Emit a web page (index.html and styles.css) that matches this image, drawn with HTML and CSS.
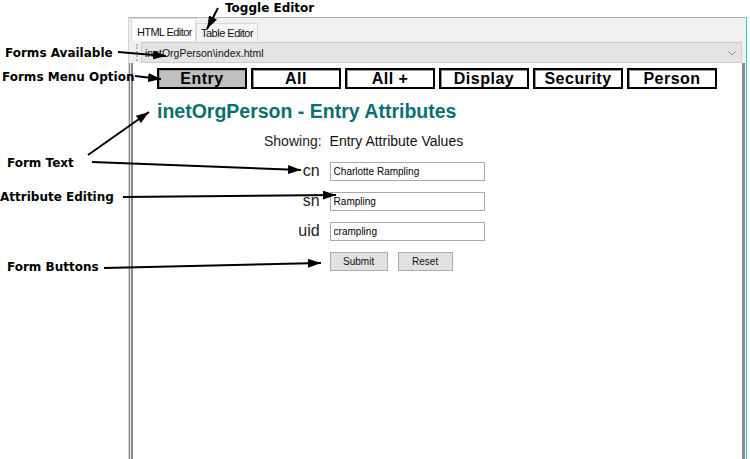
FILE: index.html
```html
<!DOCTYPE html>
<html lang="en">
<head>
    <meta charset="UTF-8">
    <meta name="viewport" content="width=device-width, initial-scale=1.0">
    <title>Form Editor - inetOrgPerson</title>
    <link rel="stylesheet" href="styles.css">
</head>
<body>
    <div class="window">
        <div class="tabs">
            <div class="tab active">HTML Editor</div>
            <div class="tab">Table Editor</div>
        </div>

        <div class="toolbar">
            <span class="grip"></span>
            <div class="select">
                <span>inetOrgPerson\index.html</span>
                <svg class="chevron" width="8" height="5" viewBox="0 0 8 5">
                    <polyline points="0.5,0.5 4,4 7.5,0.5" fill="none" stroke="#8a8a8a" stroke-width="1"/>
                </svg>
            </div>
        </div>

        <div class="panel">
            <div class="page">
                <div class="menu">
                    <button class="menu-btn current">Entry</button>
                    <button class="menu-btn">All</button>
                    <button class="menu-btn">All +</button>
                    <button class="menu-btn">Display</button>
                    <button class="menu-btn">Security</button>
                    <button class="menu-btn">Person</button>
                </div>

                <h1 class="form-title">inetOrgPerson - Entry Attributes</h1>

                <form class="attr-form">
                    <span class="attr-label">Showing:</span>
                    <span class="showing">Entry Attribute Values</span>

                    <label class="attr-label" for="cn">cn</label>
                    <input type="text" id="cn" value="Charlotte Rampling">

                    <label class="attr-label" for="sn">sn</label>
                    <input type="text" id="sn" value="Rampling">

                    <label class="attr-label" for="uid">uid</label>
                    <input type="text" id="uid" value="crampling">

                    <span></span>
                    <div class="actions">
                        <button type="button" class="form-btn submit">Submit</button>
                        <button type="reset" class="form-btn reset">Reset</button>
                    </div>
                </form>
            </div>
        </div>
    </div>

    <!-- callouts drawn over the screenshot -->
    <span class="note note-toggle">Toggle Editor</span>
    <span class="note note-forms">Forms Available</span>
    <span class="note note-menu">Forms Menu Option</span>
    <span class="note note-text">Form Text</span>
    <span class="note note-attr">Attribute Editing</span>
    <span class="note note-buttons">Form Buttons</span>

    <svg class="arrows" width="750" height="459" viewBox="0 0 750 459">
        <defs>
            <marker id="head" markerWidth="13" markerHeight="9" refX="13" refY="4.5" orient="auto" markerUnits="userSpaceOnUse">
                <path d="M0,0 L13,4.5 L0,9 Z" fill="#000"/>
            </marker>
        </defs>
        <g stroke="#000" stroke-width="2" marker-end="url(#head)">
            <line x1="218" y1="8" x2="207" y2="29"/>
            <line x1="118" y1="52" x2="166" y2="56"/>
            <line x1="135" y1="76" x2="161" y2="79"/>
            <line x1="88" y1="155" x2="149" y2="112"/>
            <line x1="92" y1="162" x2="301" y2="170"/>
            <line x1="123" y1="197" x2="336" y2="195"/>
            <line x1="104" y1="268" x2="321" y2="263"/>
        </g>
    </svg>
</body>
</html>
```

FILE: styles.css
```css
* {
    margin: 0;
    padding: 0;
    box-sizing: border-box;
}

html, body {
    width: 750px;
    height: 459px;
    overflow: hidden;
    background: white;
    font-family: "Liberation Sans", Arial, sans-serif;
}

body {
    position: relative;
}

.window {
    margin: 17px 0 0 128px;
    width: 619px;
    height: 442px;
    display: flex;
    flex-direction: column;
    background: #f0f0f0;
    border-top: 1px solid #b4b4b4;
    border-left: 1px solid #d2d2d2;
    border-right: 1px solid #3fc3d3;
}

/* tabs */
.tabs {
    height: 23px;
    display: flex;
    align-items: flex-end;
    padding-left: 2px;
}

.tab {
    height: 18px;
    width: 62px;
    padding: 3px 0 0 4px;
    font-size: 11px;
    letter-spacing: -0.5px;
    color: #111;
    background: #f4f4f4;
    border: 1px solid #d9d9d9;
    border-bottom: none;
}

.tab.active {
    height: 23px;
    width: 65px;
    padding: 7px 0 0 5px;
    background: white;
    letter-spacing: -0.6px;
}

/* forms dropdown */
.toolbar {
    height: 22px;
    display: flex;
    align-items: center;
    padding-left: 7px;
}

.grip {
    width: 2px;
    height: 17px;
    border-left: 2px dotted #b8b8b8;
    margin-right: 3px;
}

.select {
    width: 601px;
    height: 21px;
    margin-top: 1px;
    display: flex;
    align-items: center;
    justify-content: space-between;
    padding: 0 5px 0 3px;
    font-size: 10.5px;
    color: #111;
    background: #e4e4e4;
    border: 1px solid #cdcdcd;
}

.chevron {
    margin-top: 1px;
}

/* page area */
.panel {
    flex: 1;
    margin-right: 1px;
    padding-left: 1px;
    background: #ececec;
    border-left: 1px solid #8a8a8a;
    border-right: 3px solid #8a8a96;
}

.page {
    height: 100%;
    background: white;
    border-left: 2px solid #8a8a8a;
    padding: 5px 0 0 24px;
}

.menu {
    display: flex;
    gap: 4px;
}

.menu-btn {
    width: 90px;
    height: 21px;
    font-family: "Liberation Sans", Arial, sans-serif;
    font-weight: bold;
    font-size: 16px;
    letter-spacing: 0.5px;
    line-height: 16px;
    color: black;
    background: white;
    border: 2px solid #000;
    box-shadow: inset 1px 1px 0 #9a9a9a;
    cursor: pointer;
}

.menu-btn.current {
    background: #c0c0c0;
}

.form-title {
    margin-top: 10px;
    font-size: 19.5px;
    line-height: 24px;
    font-weight: bold;
    color: #087070;
}

.attr-form {
    width: max-content;
    margin: 3px 0 0 107px;
    display: grid;
    grid-template-columns: auto 155px;
    grid-auto-rows: 30px;
    column-gap: 10px;
    align-items: center;
}

.attr-label {
    justify-self: end;
    font-size: 16px;
    color: #222;
}

.attr-form .attr-label:first-child {
    font-size: 14px;
    margin-right: -2px;
}

.showing {
    font-size: 14px;
    color: #111;
    white-space: nowrap;
}

.attr-form input {
    width: 155px;
    height: 19px;
    padding: 0 3px;
    font-family: "Liberation Sans", Arial, sans-serif;
    font-size: 10px;
    color: #000;
    border: 1px solid #a9a9a9;
    outline: none;
}

.actions {
    display: flex;
    gap: 10px;
}

.form-btn {
    height: 19px;
    font-family: "Liberation Sans", Arial, sans-serif;
    font-size: 10px;
    color: #111;
    background: #e1e1e1;
    border: 1px solid #adadad;
}

.submit {
    width: 58px;
}

.reset {
    width: 55px;
}

/* callouts */
.note {
    position: absolute;
    font-family: "DejaVu Sans", sans-serif;
    font-weight: bold;
    font-size: 12px;
    line-height: 12px;
    color: black;
    white-space: nowrap;
}

.note-toggle { left: 225px; top: 2px; }
.note-forms { left: 5px; top: 47px; }
.note-menu { left: 2px; top: 71px; }
.note-text { left: 7px; top: 157px; }
.note-attr { left: 0; top: 191px; }
.note-buttons { left: 7px; top: 261px; }

.arrows {
    position: absolute;
    left: 0;
    top: 0;
    pointer-events: none;
}
```
